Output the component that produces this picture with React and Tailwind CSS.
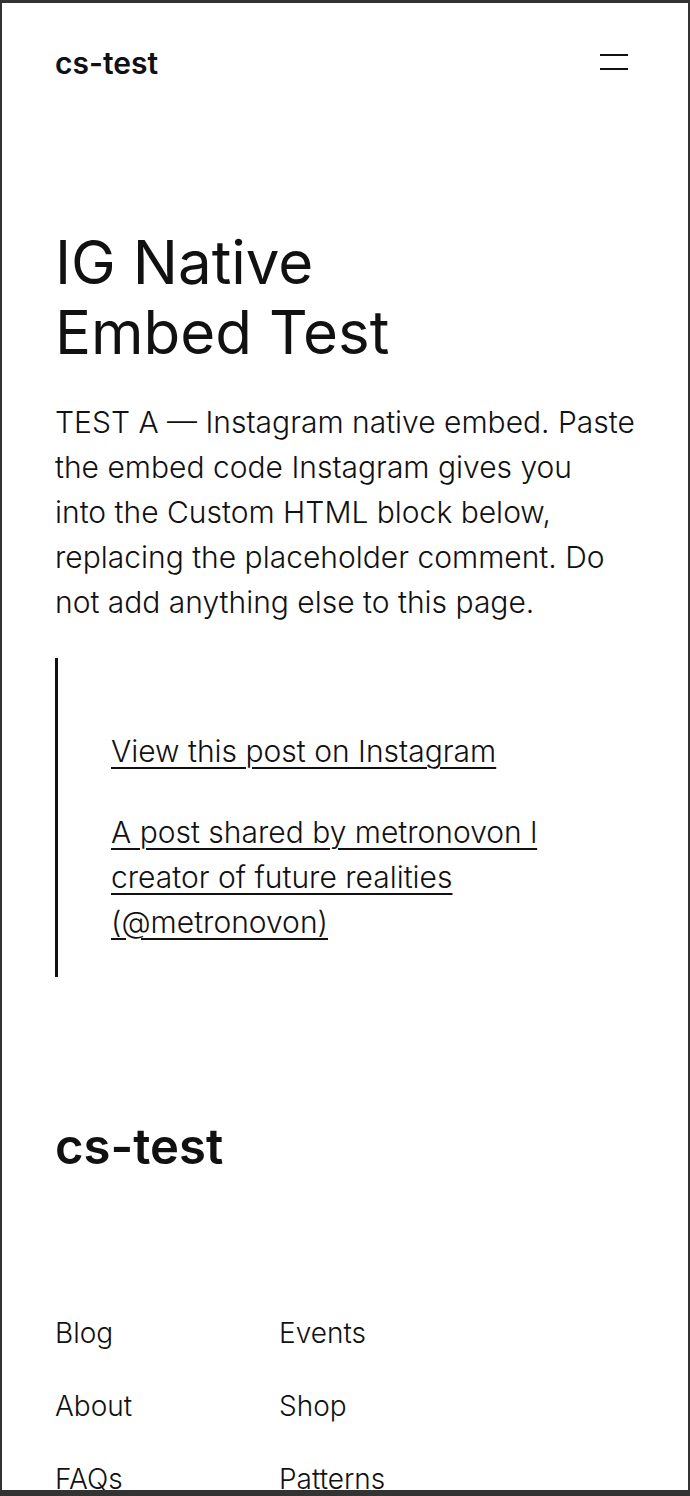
import React from "react";

const navLeft = ["Blog", "About", "FAQs"];
const navRight = ["Events", "Shop", "Patterns"];

const App = () => {
  return (
    <div
      className="h-[1496px] overflow-hidden border-t-[3px] border-x-2 border-b-[6px] border-[#333] bg-white text-[#111]"
      style={{ fontFamily: "Inter, 'Noto Sans', sans-serif" }}
    >
      <div className="px-[53px]">
        {/* Header */}
        <header className="flex items-center justify-between pt-[39px] h-[80px]">
          <a className="text-[30px] font-semibold leading-none">cs-test</a>
          <button className="flex flex-col gap-[12px] w-[28px] mr-[7px] -mt-[2px]">
            <span className="block h-[2px] w-full bg-[#111]" />
            <span className="block h-[2px] w-full bg-[#111]" />
          </button>
        </header>

        {/* Title */}
        <h1 className="mt-[144px] text-[60px] leading-[70px] font-normal">
          IG Native
          <br />
          Embed Test
        </h1>

        <p className="mt-[33px] text-[30px] leading-[45px] font-light whitespace-nowrap">
          TEST A — Instagram native embed. Paste
          <br />
          the embed code Instagram gives you
          <br />
          into the Custom HTML block below,
          <br />
          replacing the placeholder comment. Do
          <br />
          not add anything else to this page.
        </p>

        {/* Blockquote */}
        <blockquote className="mt-[33px] border-l-[3px] border-[#111] pl-[53px] pr-[20px] pt-[71px] pb-[32px] text-[30px] leading-[45px] font-light">
          <p>
            <a className="underline underline-offset-[5px] decoration-[1.5px]">View this post on Instagram</a>
          </p>
          <p className="mt-[36px]">
            <a className="underline underline-offset-[5px] decoration-[1.5px]">
              A post shared by metronovon l creator of future realities (@metronovon)
            </a>
          </p>
        </blockquote>

        {/* Footer */}
        <footer className="mt-[140px]">
          <div className="text-[49px] leading-[60px] font-semibold">cs-test</div>
          <div className="mt-[134px] grid grid-cols-[224px_1fr] gap-y-[28px] text-[28px] leading-[45px] font-light">
            {navLeft.map((item, i) => (
              <React.Fragment key={item}>
                <a>{item}</a>
                <a>{navRight[i]}</a>
              </React.Fragment>
            ))}
          </div>
        </footer>
      </div>
    </div>
  );
};

export default App;
